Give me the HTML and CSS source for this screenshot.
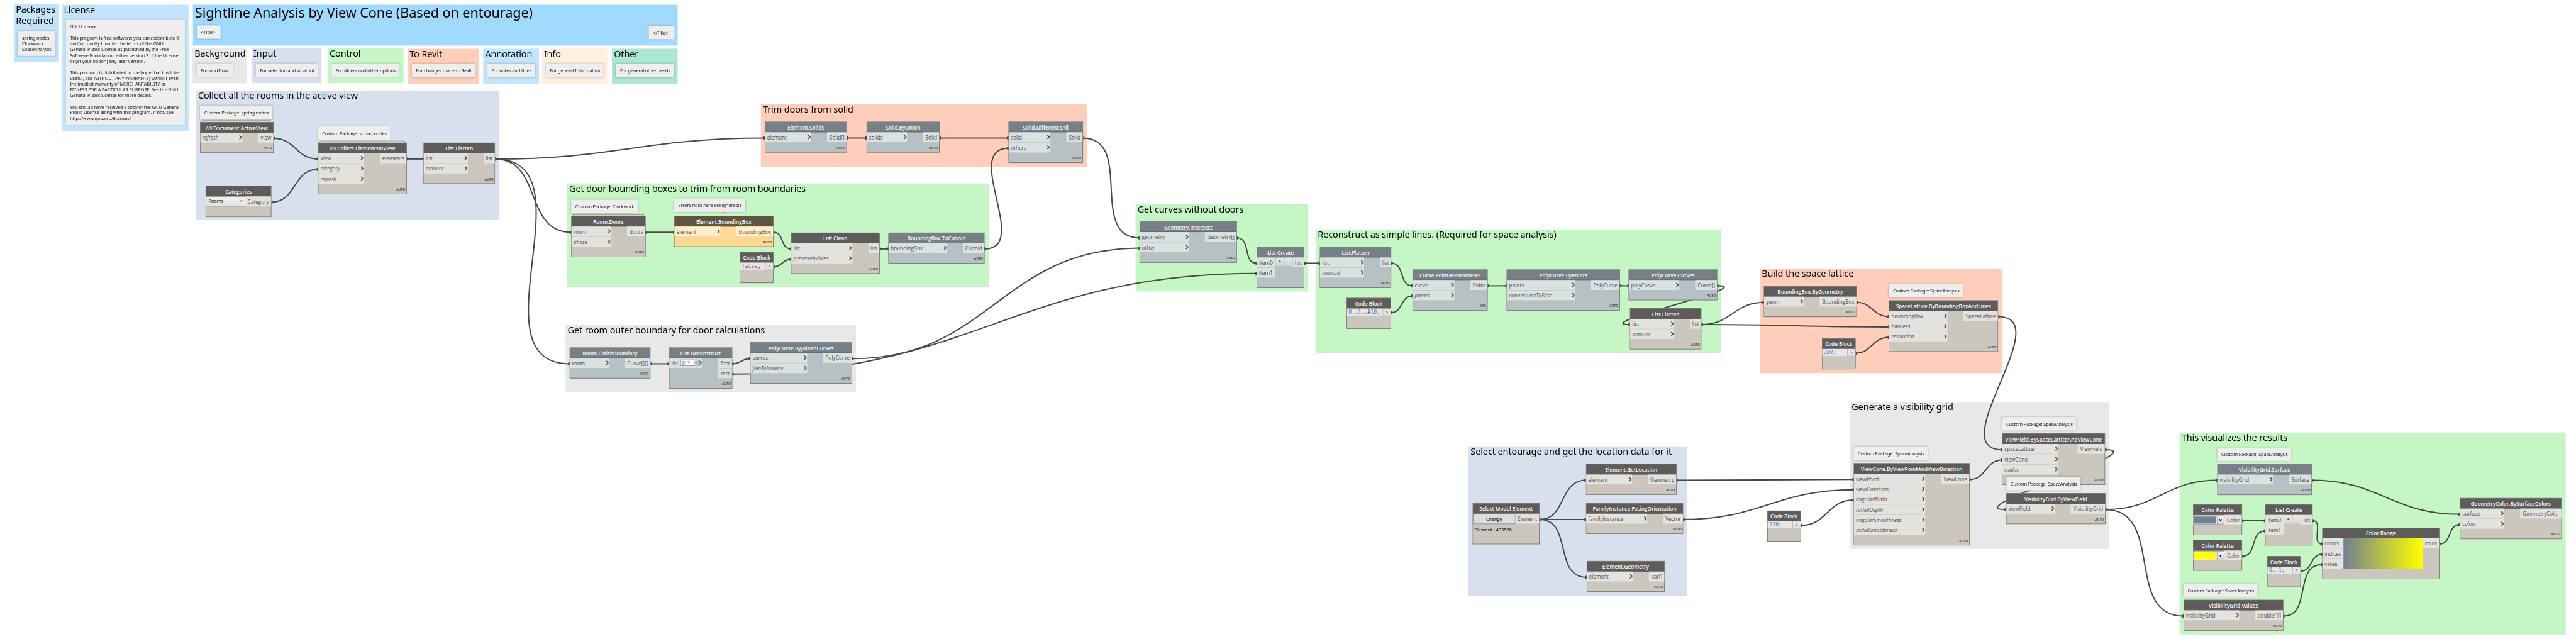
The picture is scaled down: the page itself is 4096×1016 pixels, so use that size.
FILE: index.html
```html
<!DOCTYPE html>
<html lang="en">
<head>
<meta charset="utf-8">
<title>Sightline Analysis by View Cone</title>
<link rel="stylesheet" href="styles.css">
</head>
<body>
<main class="viewport">
  <div class="workspace" id="workspace">
    <div class="layer" id="groups"></div>
    <svg class="wires" id="wires" width="6504" height="1614" viewBox="0 0 6504 1614" aria-hidden="true"></svg>
    <div class="layer" id="nodes"></div>
    <div class="layer" id="notes"></div>
  </div>
</main>
<script src="graph.js"></script>
</body>
</html>
```
FILE: styles.css
```css
:root {
  --zoom: 0.629766;
  --ink: #5e5c5a;
  --wire: #484848;
}

* { box-sizing: border-box; }

body {
  margin: 0;
  background: #fff;
  font-family: "Noto Sans", "Open Sans", sans-serif;
}

.viewport {
  width: 4096px;
  height: 1016px;
  overflow: hidden;
}

.workspace {
  position: relative;
  width: 6504px;
  height: 1614px;
  transform: scale(var(--zoom));
  transform-origin: 0 0;
}

.layer, .wires {
  position: absolute;
  left: 0;
  top: 0;
}

.wires path {
  fill: none;
  stroke: var(--wire);
  stroke-width: 3.2;
}
.wires circle { fill: var(--wire); }

/* Groups */
.group {
  position: absolute;
  padding-left: 5px;
  color: #000;
}
.group-title {
  margin: -2.5px 0 0;
  font-size: 23px;
  font-weight: 400;
  line-height: 29px;
  letter-spacing: -0.18px;
  white-space: pre;
}
.group--headline .group-title {
  margin-top: -3.5px;
  font-size: 34.5px;
  line-height: 44px;
  letter-spacing: -0.2px;
}
.group--headline { background: #a2daff; }
.group--annotation { background: #c3e5fc; }
.group--background { background: #e8e8e8; }
.group--input { background: #d7e0ec; }
.group--control { background: #c6f6c6; }
.group--revit { background: #ffcebb; }
.group--info { background: #feefdf; }
.group--other { background: #aee6d4; }

/* Notes */
.note {
  position: absolute;
  padding: 9.5px 0 10px 10.5px;
  background: #eee;
  box-shadow: 0 0 5px rgba(0, 0, 0, 0.28);
  color: #1c1c1c;
  font-size: 11.7px;
  line-height: 14.44px;
  letter-spacing: -0.22px;
  white-space: pre;
}

/* Nodes */
.node {
  --head: #5e5c5a;
  --body: #cbc6be;
  --port: #e4e2de;
  position: absolute;
  display: flex;
  flex-direction: column;
  border: 1px solid var(--ink);
  background: var(--body);
  color: #4f4f4f;
  font-family: "Open Sans", "Noto Sans", sans-serif;
  font-size: 13px;
}
.node--idle {
  --head: #768086;
  --body: #b7c0c3;
  --port: #dbe1e1;
}
.node--warn {
  --head: #5e5442;
  --body: #fdd994;
  --port: #ffeecb;
  border-color: #5e5442;
}
.node-title {
  height: 26px;
  padding-top: 1px;
  background: var(--head);
  border-bottom: 1px solid #5e5c5a;
  color: #f8f8f8;
  font-weight: 600;
  line-height: 26px;
  text-align: center;
  white-space: nowrap;
}
.node--warn .node-title { border-bottom-color: #5e5442; }
.brand {
  display: inline-block;
  width: 15.5px;
  letter-spacing: -0.7px;
  transform: scaleX(0.72);
  transform-origin: 0 50%;
}

.node-row {
  display: flex;
  justify-content: space-between;
  align-items: flex-start;
}
.ports {
  display: flex;
  flex-direction: column;
  gap: 1px;
}
.port {
  display: flex;
  justify-content: space-between;
  align-items: center;
  height: 25px;
  padding: 0 1px 0 5px;
  background: var(--port);
  line-height: 26px;
  white-space: nowrap;
}
.port--default { font-style: italic; }
.ports--out .port {
  justify-content: flex-end;
  padding: 0 5px 0 0;
}
.chevron {
  width: 8px;
  height: 12px;
  margin-bottom: 2px;
  fill: none;
  stroke: #4b4b4b;
  stroke-width: 2.6;
}
.lacing {
  position: absolute;
  right: 3px;
  bottom: 6px;
  font-size: 8px;
  font-weight: 700;
  line-height: 11px;
}

/* Sheets peeking out behind the header of a custom node */
.sheet {
  position: absolute;
  height: 3px;
  border: 1px solid #8b8a82;
  border-bottom: 0;
  background: #d8d5c8;
}
.sheet--near { left: 3px; right: 3px; top: -4px; }
.sheet--far { left: 7px; right: 7px; top: -6px; }

.warning {
  position: absolute;
  left: 119px;
  top: -11px;
  width: 11px;
  height: 7px;
  fill: #fdd994;
  stroke: #e8b048;
}

/* Code block */
.code {
  flex: 1;
  height: 18px;
  padding-left: 4px;
  background: #e8e5e2;
  color: #333;
  font-family: "Noto Sans Mono", "DejaVu Sans Mono", "Liberation Mono", monospace;
  font-size: 13.2px;
  line-height: 17px;
  white-space: pre;
}
.code .num { color: #2c86e6; }
.code .kw { color: #8a56a5; }
.code-out {
  width: 20px;
  height: 17px;
  border-left: 1px solid #aaa;
  background: var(--port);
  font-size: 12px;
  line-height: 17px;
  text-align: center;
}

/* Widgets inside nodes */
.dropdown {
  display: flex;
  justify-content: space-between;
  height: 26px;
  padding: 0 5px 0 5px;
  border: 1px solid #acacac;
  background: linear-gradient(#f2f2f2, #e3e3e3);
  color: #000;
  font-size: 12px;
  line-height: 21px;
  letter-spacing: -0.1px;
}
.dropdown svg, .palette-arrow svg {
  width: 7px;
  height: 7px;
  margin-top: 7px;
  fill: none;
  stroke: #555;
  stroke-width: 1.4;
}
.button {
  height: 26px;
  border: 1px solid #707070;
  background: #ddd;
  color: #000;
  font-size: 12px;
  line-height: 24px;
  letter-spacing: -0.2px;
  text-align: center;
}
.selection {
  padding: 5px 0 0 4px;
  color: #000;
  font-size: 11.9px;
  line-height: 16px;
  letter-spacing: -0.1px;
  white-space: pre;
}
.level {
  display: flex;
  width: 46px;
  height: 16px;
  margin: -1px -1px 0 4px;
  border: 1px solid #707070;
  background: #fff;
  color: #666;
  font-size: 10.5px;
  letter-spacing: -0.3px;
  line-height: 14px;
}
.level span { flex: 1; padding-left: 2px; }
.level svg {
  width: 11px;
  height: 14px;
  background: #ddd;
  fill: #111;
  stroke: none;
}
.steps { display: flex; flex: 1; justify-content: space-evenly; }
.step {
  width: 20px;
  height: 22px;
  background: linear-gradient(rgba(255, 255, 255, 0.65), rgba(255, 255, 255, 0.3));
  color: #000;
  font-size: 12px;
  line-height: 20px;
  text-align: center;
}
.palette {
  display: flex;
  flex: 1;
  height: 22px;
  margin-top: 2px;
  border: 1px solid #6e8093;
  border-left: 0;
  background: #fff;
}
.swatch { flex: 1; margin: 1px 2px 1px 1px; }
.swatch--slate { background: #708090; }
.swatch--yellow { background: #ff0; }
.palette-arrow {
  width: 18px;
  border-left: 1px solid #707070;
  background: linear-gradient(#f2f2f2, #cfcfcf);
  text-align: center;
}
.palette-arrow svg { display: block; margin: 7px auto 0; fill: #000; stroke: none; }
.range {
  flex: 1;
  height: 77px;
  background: linear-gradient(90deg, #708090, #ff0);
}
```
FILE: graph.js
```js
// Groups: kind, x, y, width, height, title
const groups = [
  ['annotation', 35, 11, 114, 146, 'Packages\nRequired'],
  ['annotation', 156, 12, 320, 319, 'License'],
  ['headline', 487, 12, 1224, 103, 'Sightline Analysis by View Cone (Based on entourage)'],
  ['background', 486, 122, 137, 88, 'Background'],
  ['input', 635, 122, 177, 88, 'Input'],
  ['control', 827, 122, 192, 88, 'Control'],
  ['revit', 1029, 123, 181, 88, 'To Revit'],
  ['annotation', 1220, 123, 141, 88, 'Annotation'],
  ['info', 1368, 123, 165, 88, 'Info'],
  ['other', 1545, 123, 166, 88, 'Other'],
  ['input', 495, 229, 766, 327, 'Collect all the rooms in the active view'],
  ['control', 1432, 463, 1065, 261, 'Get door bounding boxes to trim from room boundaries'],
  ['revit', 1921, 263, 823, 158, 'Trim doors from solid'],
  ['background', 1428, 820, 733, 171, 'Get room outer boundary for door calculations'],
  ['control', 2867, 515, 436, 221, 'Get curves without doors'],
  ['control', 3322, 579, 1024, 313, 'Reconstruct as simple lines. (Required for space analysis)'],
  ['revit', 4443, 678, 612, 264, 'Build the space lattice'],
  ['input', 3708, 1127, 552, 377, 'Select entourage and get the location data for it'],
  ['background', 4670, 1015, 656, 371, 'Generate a visibility grid'],
  ['control', 5503, 1092, 975, 510, 'This visualizes the results'],
];

const license = `GNU License

This program is free software: you can redistribute it
and/or modify it under the terms of the GNU
General Public License as published by the Free
Software Foundation, either version 3 of the License,
or (at your option) any later version.

This program is distributed in the hope that it will be
useful, but WITHOUT ANY WARRANTY; without even
the implied warranty of MERCHANTABILITY or
FITNESS FOR A PARTICULAR PURPOSE. See the GNU
General Public License for more details.

You should have received a copy of the GNU General
Public License along with this program. If not, see
http://www.gnu.org/licenses/`;

// Notes: x, y, width, text
const notes = [
  [45, 78, 95, 'spring nodes\nClockwork\nSpaceAnalysis'],
  [166, 50, 301, license],
  [497, 64, 60, '<Title>'],
  [1638, 65, 65, '</Title>'],
  [496, 160, 92, 'For workflow'],
  [646, 160, 156, 'For selection and whatnot'],
  [837, 160, 172, 'For sliders and other options'],
  [1040, 161, 161, 'For changes made to Revit'],
  [1230, 161, 121, 'For notes and titles'],
  [1378, 161, 146, 'For general Information'],
  [1555, 161, 147, 'For general other needs'],
  [505, 267, 182, 'Custom Package: spring nodes'],
  [803, 319, 182, 'Custom Package: spring nodes'],
  [1442, 504, 168, 'Custom Package: Clockwork'],
  [1702, 501, 179, 'Errors right here are ignorable'],
  [4769, 717, 187, 'Custom Package: SpaceAnalysis'],
  [4680, 1128, 187, 'Custom Package: SpaceAnalysis'],
  [5055, 1053, 187, 'Custom Package: SpaceAnalysis'],
  [5066, 1204, 187, 'Custom Package: SpaceAnalysis'],
  [5598, 1130, 187, 'Custom Package: SpaceAnalysis'],
  [5513, 1473, 187, 'Custom Package: SpaceAnalysis'],
];

// Ports that fall back to a default value are marked with a leading "~".
// iw / ow are the widths of the input and output port columns.
const nodes = [
  { id: 'doc', t: 'Document.ActiveView', brand: 1, x: 505, y: 308, w: 186, in: ['~refresh'], iw: 106, out: ['view'], ow: 39, stack: 1 },
  { id: 'collect', t: 'Collect.ElementsInView', brand: 1, x: 803, y: 360, w: 224, in: ['view', '~category', '~refresh'], iw: 115, out: ['elements'], ow: 67, stack: 1 },
  { id: 'flatA', t: 'List.Flatten', x: 1069, y: 360, w: 181, in: ['list', '~amount'], iw: 111, out: ['list'], ow: 28 },
  { id: 'cat', t: 'Categories', x: 519, y: 469, w: 166, dropdown: 'Rooms', iw: 99, out: ['Category'], ow: 65 },

  { id: 'doors', t: 'Room.Doors', x: 1442, y: 545, w: 188, in: ['room', '~phase'], iw: 100, out: ['doors'], ow: 46, stack: 1 },
  { id: 'bbox', t: 'Element.BoundingBox', x: 1702, y: 545, w: 251, kind: 'warn', in: ['element'], iw: 116, out: ['BoundingBox'], ow: 93 },
  { id: 'clean', t: 'List.Clean', x: 1997, y: 587, w: 224, in: ['list', '~preserveIndices'], iw: 154, out: ['list'], ow: 27 },
  { id: 'codeFalse', t: 'Code Block', x: 1868, y: 636, w: 85, code: '<span class="kw">false</span>;' },
  { id: 'cuboid', t: 'BoundingBox.ToCuboid', x: 2243, y: 587, w: 243, kind: 'idle', in: ['boundingBox'], iw: 147, out: ['Cuboid'], ow: 54 },

  { id: 'solids', t: 'Element.Solids', x: 1931, y: 307, w: 207, kind: 'idle', in: ['element'], iw: 116, out: ['Solid[]'], ow: 49 },
  { id: 'union', t: 'Solid.ByUnion', x: 2188, y: 307, w: 184, kind: 'idle', in: ['solids'], iw: 101, out: ['Solid'], ow: 41 },
  { id: 'diff', t: 'Solid.DifferenceAll', x: 2546, y: 307, w: 188, kind: 'idle', in: ['solid', 'others'], iw: 105, out: ['Solid'], ow: 41 },

  { id: 'finish', t: 'Room.FinishBoundary', x: 1438, y: 877, w: 204, kind: 'idle', in: ['room'], iw: 99, out: ['Curve[][]'], ow: 63 },
  { id: 'decon', t: 'List.Deconstruct', x: 1689, y: 877, w: 160, kind: 'idle', in: ['list'], level: '@L3', iw: 83, out: ['first', 'rest'], ow: 35 },
  { id: 'joined', t: 'PolyCurve.ByJoinedCurves', x: 1894, y: 864, w: 257, kind: 'idle', in: ['curves', '~joinTolerance'], iw: 143, out: ['PolyCurve'], ow: 72 },

  { id: 'sect', t: 'Geometry.Intersect', x: 2877, y: 559, w: 246, kind: 'idle', in: ['geometry', 'other'], iw: 124, out: ['Geometry[]'], ow: 80 },
  { id: 'listA', t: 'List Create', x: 3173, y: 623, w: 120, kind: 'idle', in: ['item0', 'item1'], steps: 1, iw: 46, out: ['list'], ow: 28 },

  { id: 'flatB', t: 'List.Flatten', x: 3332, y: 623, w: 181, kind: 'idle', in: ['list', '~amount'], iw: 111, out: ['list'], ow: 28 },
  { id: 'pointAt', t: 'Curve.PointAtParameter', x: 3566, y: 680, w: 190, kind: 'idle', in: ['curve', '~param'], iw: 105, out: ['Point'], ow: 43, lacing: 'XXX' },
  { id: 'byPoints', t: 'PolyCurve.ByPoints', x: 3804, y: 680, w: 286, kind: 'idle', in: ['points', '~connectLastToFirst'], iw: 172, out: ['PolyCurve'], ow: 72 },
  { id: 'curves', t: 'PolyCurve.Curves', x: 4112, y: 680, w: 224, kind: 'idle', in: ['polyCurve'], iw: 127, out: ['Curve[]'], ow: 55 },
  { id: 'codeRange', t: 'Code Block', x: 3400, y: 752, w: 112, code: '<span class="num">0</span>..<span class="num">1</span>..#<span class="num">10</span>;' },
  { id: 'flatC', t: 'List.Flatten', x: 4115, y: 778, w: 181, in: ['list', '~amount'], iw: 111, out: ['list'], ow: 28 },

  { id: 'byGeom', t: 'BoundingBox.ByGeometry', x: 4453, y: 722, w: 235, in: ['geom'], iw: 100, out: ['BoundingBox'], ow: 93 },
  { id: 'lattice', t: 'SpaceLattice.ByBoundingBoxAndLines', x: 4769, y: 758, w: 276, in: ['boundingBox', 'barriers', '~resolution'], iw: 147, out: ['SpaceLattice'], ow: 87 },
  { id: 'code300', t: 'Code Block', x: 4600, y: 854, w: 85, code: '<span class="num">300</span>;' },

  { id: 'select', t: 'Select Model Element', x: 3718, y: 1270, w: 169, button: 'Change', iw: 107, out: ['Element'], ow: 60, selection: 'Element : 433586', rows: 2 },
  { id: 'getLoc', t: 'Element.GetLocation', x: 4004, y: 1171, w: 229, in: ['element'], iw: 116, out: ['Geometry'], ow: 71 },
  { id: 'facing', t: 'FamilyInstance.FacingOrientation', x: 4004, y: 1270, w: 246, in: ['familyInstance'], iw: 154, out: ['Vector'], ow: 50 },
  { id: 'elGeom', t: 'Element.Geometry', x: 4006, y: 1416, w: 197, in: ['element'], iw: 116, out: ['var[]'], ow: 39, free: 1 },

  { id: 'code130', t: 'Code Block', x: 4462, y: 1289, w: 85, code: '<span class="num">130</span>;' },
  { id: 'cone', t: 'ViewCone.ByViewPointAndViewDirection', x: 4680, y: 1169, w: 293, in: ['viewPoint', 'viewDirection', '~angularWidth', '~radialDepth', '~angularSmoothness', '~radialSmoothness'], iw: 180, out: ['ViewCone'], ow: 71 },
  { id: 'field', t: 'ViewField.BySpaceLatticeAndViewCone', x: 5055, y: 1094, w: 260, in: ['spaceLattice', 'viewCone', '~radius'], iw: 141, out: ['ViewField'], ow: 68 },
  { id: 'grid', t: 'VisibilityGrid.ByViewField', x: 5065, y: 1245, w: 251, in: ['viewField'], iw: 122, out: ['VisibilityGrid'], ow: 87 },

  { id: 'surface', t: 'VisibilityGrid.Surface', x: 5598, y: 1171, w: 239, kind: 'idle', in: ['visibilityGrid'], iw: 140, out: ['Surface'], ow: 57 },
  { id: 'slate', t: 'Color Palette', x: 5537, y: 1273, w: 124, palette: 'slate', out: ['Color'], ow: 44 },
  { id: 'yellow', t: 'Color Palette', x: 5537, y: 1363, w: 124, palette: 'yellow', out: ['Color'], ow: 44 },
  { id: 'listB', t: 'List Create', x: 5719, y: 1273, w: 120, in: ['item0', 'item1'], steps: 1, iw: 46, out: ['list'], ow: 28 },
  { id: 'codeUnit', t: 'Code Block', x: 5724, y: 1404, w: 85, code: '<span class="num">0</span>..<span class="num">1</span>;' },
  { id: 'range', t: 'Color Range', x: 5863, y: 1332, w: 296, in: ['colors', 'indices', 'value'], plain: 1, range: 1, iw: 53, out: ['color'], ow: 41 },
  { id: 'geomColor', t: 'GeometryColor.BySurfaceColors', x: 6211, y: 1257, w: 257, in: ['surface', '~colors'], iw: 111, out: ['GeometryColor'], ow: 104 },
  { id: 'values', t: 'VisibilityGrid.Values', x: 5513, y: 1514, w: 252, in: ['visibilityGrid'], iw: 140, out: ['double[][]'], ow: 70 },
];

// Wires: source node, output index, target node, input index
const wires = [
  ['doc', 0, 'collect', 0], ['cat', 0, 'collect', 1], ['collect', 0, 'flatA', 0],
  ['flatA', 0, 'solids', 0], ['flatA', 0, 'doors', 0], ['flatA', 0, 'finish', 0],
  ['doors', 0, 'bbox', 0], ['bbox', 0, 'clean', 0], ['codeFalse', 0, 'clean', 1],
  ['clean', 0, 'cuboid', 0], ['cuboid', 0, 'diff', 1],
  ['solids', 0, 'union', 0], ['union', 0, 'diff', 0], ['diff', 0, 'sect', 0],
  ['finish', 0, 'decon', 0], ['decon', 0, 'joined', 0], ['decon', 1, 'listA', 1],
  ['joined', 0, 'sect', 1], ['sect', 0, 'listA', 0], ['listA', 0, 'flatB', 0],
  ['flatB', 0, 'pointAt', 0], ['codeRange', 0, 'pointAt', 1],
  ['pointAt', 0, 'byPoints', 0], ['byPoints', 0, 'curves', 0], ['curves', 0, 'flatC', 0],
  ['flatC', 0, 'byGeom', 0], ['flatC', 0, 'lattice', 1], ['byGeom', 0, 'lattice', 0],
  ['code300', 0, 'lattice', 2], ['lattice', 0, 'field', 0],
  ['select', 0, 'getLoc', 0], ['select', 0, 'facing', 0], ['select', 0, 'elGeom', 0],
  ['getLoc', 0, 'cone', 0], ['facing', 0, 'cone', 1], ['code130', 0, 'cone', 2],
  ['cone', 0, 'field', 1], ['field', 0, 'grid', 0],
  ['grid', 0, 'surface', 0], ['grid', 0, 'values', 0],
  ['surface', 0, 'geomColor', 0], ['slate', 0, 'listB', 0], ['yellow', 0, 'listB', 1],
  ['listB', 0, 'range', 0], ['codeUnit', 0, 'range', 1], ['values', 0, 'range', 2],
  ['range', 0, 'geomColor', 1],
];

const HEADER = 27, ROW = 26;
const escape = (s) => s.replace(/&/g, '&amp;').replace(/</g, '&lt;').replace(/>/g, '&gt;');
const box = (x, y, w, h) => `left:${x}px;top:${y}px;width:${w}px;height:${h}px`;
const chevron = '<svg class="chevron" viewBox="0 0 8 12"><path d="M1.6 1.2 6.2 6 1.6 10.8"/></svg>';

function inputPort(name, node) {
  const optional = name[0] === '~';
  const label = optional ? name.slice(1) : name;
  const level = node.level
    ? `<div class="level"><span>${node.level}</span><svg viewBox="0 0 11 14"><path d="M5.500 2 8 5.500H3zM5.500 12 8 8.500H3zM0 0h1v14H0zM1 6.700h10v.6H1z"/></svg></div>` : '';
  const arrow = node.plain || node.steps ? '' : chevron;
  return `<div class="port${optional ? ' port--default' : ''}"><span>${label}</span>${level}${arrow}</div>`;
}

function leftColumn(node) {
  const width = `style="width:${node.iw}px"`;
  if (node.in) return `<div class="ports" ${width}>${node.in.map((p) => inputPort(p, node)).join('')}</div>`;
  if (node.dropdown) return `<div class="dropdown" ${width}><span>${node.dropdown}</span><svg viewBox="0 0 7 7"><path d="M1 1.500 3.500 5.500 6 1.500"/></svg></div>`;
  if (node.button) return `<div class="button" ${width}>${node.button}</div>`;
  return `<div class="palette"><div class="swatch swatch--${node.palette}"></div><div class="palette-arrow"><svg viewBox="0 0 7 7"><path d="M0 0.500H2.400L3.500 3 4.600 0.500H7L3.500 6.500z"/></svg></div></div>`;
}

function nodeMarkup(node) {
  const rows = node.rows || Math.max((node.in || []).length, (node.out || []).length, 1);
  const height = HEADER + ROW * rows + 25;
  let body;
  if (node.code) {
    body = `<div class="node-row"><div class="code">${node.code}</div><div class="code-out">&gt;</div></div>`;
  } else {
    const middle = node.steps ? '<div class="steps"><div class="step">+</div><div class="step">-</div></div>'
      : node.range ? '<div class="range"></div>' : '';
    const outs = node.out.map((p) => `<div class="port">${p}</div>`).join('');
    body = `<div class="node-row">${leftColumn(node)}${middle}<div class="ports ports--out" style="width:${node.ow}px">${outs}</div></div>`;
  }
  const brand = node.brand ? '<span class="brand">/\\/\\/</span> ' : '';
  const sheets = node.stack ? '<div class="sheet sheet--far"></div><div class="sheet sheet--near"></div>' : '';
  const warning = node.kind === 'warn' ? '<svg class="warning" viewBox="0 0 11 7"><path d="M.5.5h10L5.500 6.500z"/></svg>' : '';
  const selection = node.selection ? `<div class="selection">${node.selection}</div>` : '';
  const laced = node.in && !node.steps && !node.range;
  const lacing = laced ? `<div class="lacing">${node.lacing || 'AUTO'}</div>` : '';
  return `<section class="node node--${node.kind || 'active'}" style="${box(node.x, node.y, node.w, height)}">
    ${sheets}<div class="node-title">${brand}${node.t}</div>${body}${selection}${lacing}${warning}</section>`;
}

function wireMarkup([from, o, to, i]) {
  const a = nodes.find((n) => n.id === from);
  const b = nodes.find((n) => n.id === to);
  const x1 = a.x + a.w, y1 = a.y + (a.code ? 37.5 : 41.5 + o * ROW);
  const x2 = b.x, y2 = b.y + 41.5 + i * ROW;
  const bend = 0.45 * Math.hypot(x2 - x1, y2 - y1);
  return `<path d="M${x1} ${y1}C${x1 + bend} ${y1} ${x2 - bend} ${y2} ${x2} ${y2}"/>
    <circle cx="${x1}" cy="${y1}" r="4.2"/><circle cx="${x2}" cy="${y2}" r="4.2"/>`;
}

document.getElementById('groups').innerHTML = groups.map(([kind, x, y, w, h, title]) =>
  `<section class="group group--${kind}" style="${box(x, y, w, h)}"><h2 class="group-title">${title}</h2></section>`).join('');
document.getElementById('wires').innerHTML = wires.map(wireMarkup).join('');
document.getElementById('nodes').innerHTML = nodes.map(nodeMarkup).join('');
document.getElementById('notes').innerHTML = notes.map(([x, y, w, text]) =>
  `<div class="note" style="left:${x}px;top:${y}px;width:${w}px">${escape(text)}</div>`).join('');
```
